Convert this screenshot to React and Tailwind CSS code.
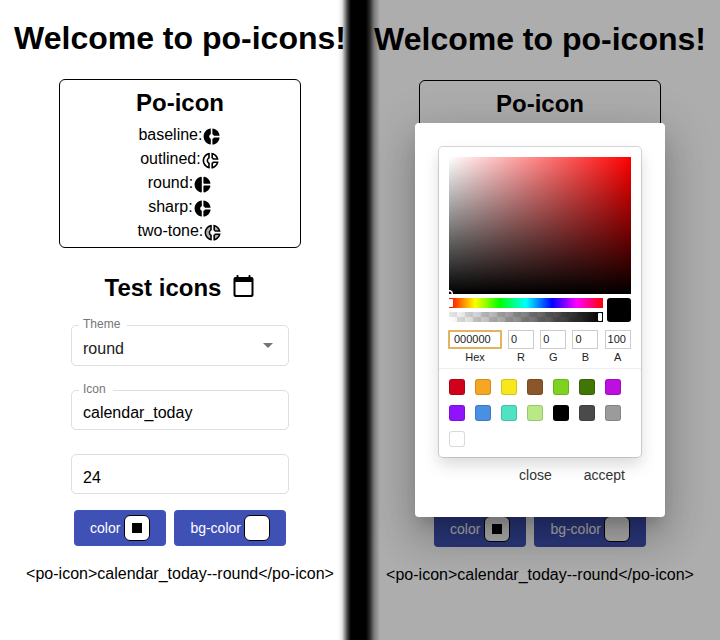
import React from "react";

const DONUT =
  "M11 9.16V2c-5 .5-9 4.79-9 10s4 9.5 9 10v-7.16c-1-.41-2-1.52-2-2.84s1-2.43 2-2.84zM14.86 11H22c-.48-4.75-4-8.53-9-9v7.16c1 .3 1.52.98 1.86 1.84zM13 14.84V22c5-.47 8.52-4.25 9-9h-7.14c-.34.86-.86 1.54-1.86 1.84z";
const DONUT_ROUND =
  "M11 3.18v17.64c0 .64-.59 1.12-1.21.98C5.32 20.8 2 16.79 2 12s3.32-8.8 7.79-9.8c.62-.14 1.21.34 1.21.98zm2.03 0v6.81c0 .55.45 1 1 1h6.79c.64 0 1.12-.59.98-1.22-.85-3.76-3.8-6.72-7.55-7.57-.63-.14-1.22.34-1.22.98zm0 10.83v6.81c0 .64.59 1.12 1.22.98 3.76-.85 6.71-3.82 7.56-7.58.14-.62-.35-1.22-.98-1.22h-6.79c-.56.01-1.01.46-1.01 1.01z";
const DONUT_OUTLINE =
  "M14.82 11h7.13c-.47-4.72-4.23-8.48-8.95-8.95v7.13c.85.31 1.51.97 1.82 1.82zM15 4.58C17 5.4 18.6 7 19.42 9h-3.43c-.28-.37-.62-.71-.99-.99V4.58zM2 12c0 5.19 3.95 9.45 9 9.95v-7.13C9.84 14.4 9 13.3 9 12c0-1.3.84-2.4 2-2.82V2.05c-5.05.5-9 4.76-9 9.95zm7-7.42v3.44c-1.23.92-2 2.39-2 3.98 0 1.59.77 3.06 2 3.99v3.44C6.04 18.24 4 15.35 4 12c0-3.35 2.04-6.24 5-7.42zm4 10.24v7.13c4.72-.47 8.48-4.23 8.95-8.95h-7.13c-.31.85-.97 1.51-1.82 1.82zm2 1.17c.37-.28.71-.61.99-.99h3.43C18.6 17 17 18.6 15 19.42v-3.43z";
const DONUT_TONE =
  "M4 12c0 3.35 2.04 6.24 5 7.42v-3.43C7.77 15.06 7 13.59 7 12s.77-3.06 2-3.98V4.58C6.04 5.76 4 8.65 4 12zM16 9h3.42C18.6 7 17 5.4 15 4.58v3.43c.37.28.71.62 1 .99zM15 19.42C17 18.6 18.6 17 19.42 15h-3.43c-.28.37-.61.71-.99.99z";

const icons = [
  { name: "baseline:", path: DONUT },
  { name: "outlined:", path: DONUT_OUTLINE },
  { name: "round:", path: DONUT_ROUND },
  { name: "sharp:", path: DONUT },
  { name: "two-tone:", path: DONUT_OUTLINE, tone: DONUT_TONE },
];

function Field({ label, value, arrow, className }) {
  return (
    <div
      className={
        "relative flex w-[218px] items-center justify-between rounded-[5px] border border-[#dfdfdf] pr-[15px] pl-[11px] text-base text-black " +
        className
      }
    >
      {label && (
        <span className="absolute -top-[10px] left-[7px] bg-white pr-[7px] pl-1 text-[12px] leading-4 text-[#757575]">
          {label}
        </span>
      )}
      <span className="leading-6">{value}</span>
      {arrow && (
        <span className="mb-[8px] border-x-[5px] border-t-[5px] border-x-transparent border-t-[#757575]" />
      )}
    </div>
  );
}

function ColorButton({ label, children }) {
  return (
    <div className="flex h-9 items-center gap-[3.5px] rounded-[4px] bg-[#3f51b5] pr-4 pl-[16.5px] text-sm text-white">
      <span>{label}</span>
      <span className="flex size-[26px] items-center justify-center rounded-[6px] border border-black bg-white">
        {children}
      </span>
    </div>
  );
}

function Page() {
  return (
    <div className="flex h-full flex-col items-center whitespace-nowrap text-black">
      <h1 className="mt-5 text-[32px] leading-9 font-bold">Welcome to po-icons!</h1>
      <section className="mt-[23px] flex h-[169px] w-[242px] flex-col items-center rounded-[6px] border border-black pt-[9px]">
        <h2 className="mb-[6px] text-2xl leading-7 font-bold">Po-icon</h2>
        {icons.map((icon) => (
          <div key={icon.name} className="flex h-6 items-center text-base">
            <span className="leading-6">{icon.name}</span>
            <svg className="mt-[3px] size-[19.2px]" viewBox="0 0 24 24" fill="currentColor">
              {icon.tone && <path d={icon.tone} opacity=".3" />}
              <path d={icon.path} />
            </svg>
          </div>
        ))}
      </section>
      <div className="mt-[26px] flex h-7 gap-[10px]">
        <h2 className="text-2xl leading-7 font-bold">Test icons</h2>
        <svg className="size-6" viewBox="-0.5 0 24 24" fill="currentColor">
          <path d="M20 3h-1V2c0-.55-.45-1-1-1s-1 .45-1 1v1H7V2c0-.55-.45-1-1-1s-1 .45-1 1v1H4c-1.1 0-2 .9-2 2v16c0 1.1.9 2 2 2h16c1.1 0 2-.9 2-2V5c0-1.1-.9-2-2-2zm-1 18H5c-.55 0-1-.45-1-1V8h16v12c0 .55-.45 1-1 1z" />
        </svg>
      </div>
      <Field className="mt-[23px] h-[41px] pt-[7px]" label="Theme" value={<span className="text-[#212121]">round</span>} arrow />
      <Field className="mt-6 h-10 pt-[5px]" label="Icon" value="calendar_today" />
      <Field className="mt-6 h-10 pt-[7px]" value="24" />
      <div className="mt-4 flex gap-2">
        <ColorButton label="color">
          <span className="size-[10px] bg-black" />
        </ColorButton>
        <ColorButton label="bg-color" />
      </div>
      <p className="mt-4 text-base leading-6">{"<po-icon>calendar_today--round</po-icon>"}</p>
    </div>
  );
}

const swatches = [
  "bg-[#d0021b]",
  "bg-[#f5a623]",
  "bg-[#f8e71c]",
  "bg-[#8b572a]",
  "bg-[#7ed321]",
  "bg-[#417505]",
  "bg-[#bd10e0]",
  "bg-[#9013fe]",
  "bg-[#4a90e2]",
  "bg-[#50e3c2]",
  "bg-[#b8e986]",
  "bg-[#000000]",
  "bg-[#4a4a4a]",
  "bg-[#9b9b9b]",
  "bg-[#ffffff]",
];

const channels = [
  { label: "R", value: "0" },
  { label: "G", value: "0" },
  { label: "B", value: "0" },
  { label: "A", value: "100" },
];

function Picker() {
  return (
    <div className="h-[310px] w-[202px] rounded-[4px] bg-white pt-[10px] shadow-[0_0_0_1px_rgba(0,0,0,0.15),0_8px_16px_rgba(0,0,0,0.15)]">
      <div className="mx-[10px] w-[182px]">
        <div className="relative h-[137px] overflow-hidden bg-[linear-gradient(to_top,#000,transparent),linear-gradient(to_right,#fff,#f00)]">
          <span className="absolute -bottom-[4px] -left-[4px] size-2 rounded-full shadow-[inset_0_0_0_1.5px_#fff]" />
        </div>
        <div className="mt-1 flex gap-1">
          <div className="flex w-[154px] flex-col gap-1">
            <div className="relative h-[10px] overflow-hidden bg-[linear-gradient(to_right,#f00_0%,#ff0_17%,#0f0_33%,#0ff_50%,#00f_67%,#f0f_83%,#f00_100%)]">
              <span className="absolute top-px left-0 h-2 w-1 rounded-r-[1px] bg-white" />
            </div>
            <div className="relative h-[10px] bg-[linear-gradient(to_right,transparent,#000),conic-gradient(#fff_25%,#e6e6e6_0_50%,#fff_0_75%,#e6e6e6_0)] bg-[size:auto,16px_16px] bg-[position:0_0,0_-3px]">
              <span className="absolute top-px right-px h-2 w-1 rounded-[1px] bg-white" />
            </div>
          </div>
          <div className="size-6 rounded-[3px] bg-black" />
        </div>
        <div className="mt-2 flex text-[11px] text-[#222]">
          <div className="-ml-px flex w-[54px] flex-col items-center">
            <div className="flex h-[19px] w-[54px] items-center rounded-[1px] border-2 border-[#e5b25d] pl-[4px] leading-none">
              000000
            </div>
            <span className="mt-[2px] leading-3">Hex</span>
          </div>
          <div className="ml-[6px] flex gap-[6.2px]">
            {channels.map((channel) => (
              <div key={channel.label} className="flex w-[26px] flex-col items-center">
                <div className="flex h-[19px] w-[26px] items-center border border-[#ccc] pl-[2px] leading-none">
                  {channel.value}
                </div>
                <span className="mt-[2px] leading-3">{channel.label}</span>
              </div>
            ))}
          </div>
        </div>
      </div>
      <div className="mt-[5px] grid grid-cols-[repeat(7,16px)] gap-[10px] border-t border-[#eee] px-[10px] pt-[10px]">
        {swatches.map((color) => (
          <span
            key={color}
            className={"size-4 rounded-[3px] shadow-[inset_0_0_0_1px_rgba(0,0,0,0.15)] " + color}
          />
        ))}
      </div>
    </div>
  );
}

export default function App() {
  return (
    <main className="relative flex h-[640px] w-[720px] overflow-hidden bg-white font-['Liberation_Sans',Arial,sans-serif]">
      <div className="w-[360px]">
        <Page />
      </div>
      <div className="relative w-[360px]">
        <div className="h-full pt-px">
          <Page />
        </div>
        <div className="absolute inset-0 bg-black/32" />
        <div className="absolute top-[123px] left-[55px] flex h-[394px] w-[250px] flex-col rounded-[4px] bg-white pt-6 pl-6 shadow-[0_11px_15px_-7px_rgba(0,0,0,0.2),0_24px_38px_3px_rgba(0,0,0,0.14),0_9px_46px_8px_rgba(0,0,0,0.12)]">
          <Picker />
          <div className="mt-2 mr-10 flex justify-end gap-8 text-sm leading-5 text-[#333]">
            <span>close</span>
            <span>accept</span>
          </div>
        </div>
      </div>
      <div className="absolute inset-y-0 left-[338px] w-11 bg-[linear-gradient(to_right,transparent_0,rgba(0,0,0,0.1)_4px,rgba(0,0,0,0.45)_7px,rgba(0,0,0,0.8)_10px,#000_13px,#000_28px,rgba(0,0,0,0.75)_32px,rgba(0,0,0,0.3)_36px,transparent_42px)]" />
    </main>
  );
}
